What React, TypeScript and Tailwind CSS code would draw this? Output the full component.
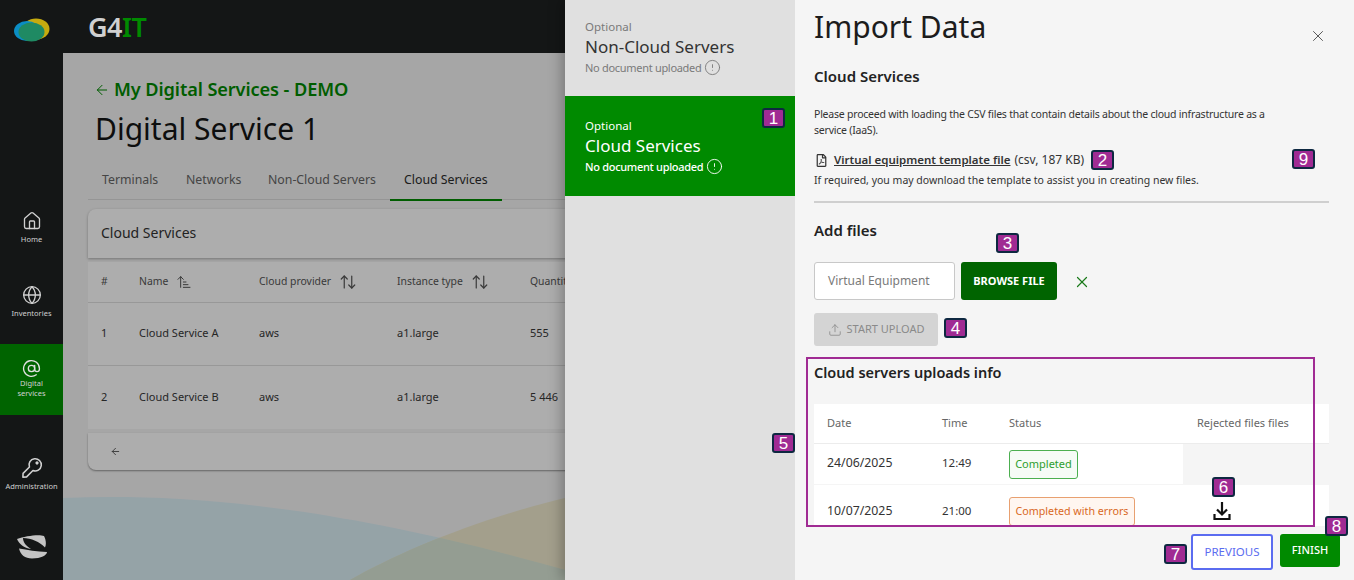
import React from "react";
import { House, Globe, AtSign, X, ArrowLeft, ArrowUpDown, ArrowUpNarrowWide, Upload, CircleAlert } from "lucide-react";
import { FaRegFilePdf } from "react-icons/fa";

const font = { fontFamily: '"Noto Sans", sans-serif' };

function Badge({ n, className }: { n: string; className: string }) {
  return (
    <div
      className={`absolute z-30 flex h-[20px] w-[23px] items-center justify-center rounded-[3px] border-2 border-[#0e2841] bg-[#a02b93] text-[17px] leading-none text-white ${className}`}
      style={{ fontFamily: '"Liberation Sans", sans-serif' }}
    >
      {n}
    </div>
  );
}

function NavItem({ icon, label, active, className, labelClass }: { icon: React.ReactNode; label: React.ReactNode; active?: boolean; className?: string; labelClass?: string }) {
  return (
    <div className={`flex flex-col items-center text-center text-[7.5px] leading-[10px] text-[#d0d0d0] ${active ? "bg-[#006400]" : ""} ${className ?? ""}`}>
      {icon}
      <div className={labelClass ?? "mt-[3px]"}>{label}</div>
    </div>
  );
}

function KeyIcon() {
  return (
    <svg width="22" height="22" viewBox="0 0 24 24" fill="none" stroke="currentColor" strokeWidth="1.7" strokeLinejoin="round">
      <g transform="translate(15.500 8.500) rotate(45)">
        <path d="M-2.700 6.200A6.700 6.700 0 1 1 2.700 6.200V16L0 19L-2.700 16Z" />
        <circle cx="0" cy="-2.800" r="0.900" />
      </g>
    </svg>
  );
}

function Sidebar() {
  return (
    <aside className="flex h-full w-[63px] shrink-0 flex-col items-stretch bg-[#141616]">
      <div className="flex h-[53px] items-start justify-center pt-[18px]">
        <svg width="36" height="26" viewBox="0 0 36 26">
          <ellipse cx="22" cy="11" rx="13.500" ry="10.500" fill="#c6ab0f" />
          <ellipse cx="13" cy="13" rx="13" ry="10" fill="#0b8dc4" />
          <ellipse cx="17.500" cy="14" rx="13" ry="9.500" fill="#1f8a63" />
        </svg>
      </div>
      <NavItem className="mt-[158px]" icon={<House size={20} strokeWidth={1.6} />} label="Home" />
      <NavItem className="mt-[41px]" icon={<Globe size={20} strokeWidth={1.6} />} label="Inventories" />
      <NavItem
        active
        labelClass="mt-0"
        className="mt-[26px] h-[71px] justify-start pt-[15px] text-[#c8dcc0]"
        icon={<AtSign size={19} strokeWidth={1.7} className="text-[#e0e0e0]" />}
        label={<>Digital<br />services</>}
      />
      <NavItem className="mt-[42px]" labelClass="mt-[2px]" icon={<KeyIcon />} label="Administration" />
      <div className="mt-[44px] flex justify-center">
        <svg width="30" height="24" viewBox="0 0 30 24" fill="#c4c4c4">
          <path d="M0 4C8 1 22 -1 27 1C29 5 29.500 9 28 12.500C23 7 14 3 6 3C6 7 9 11 14 14C7 13 2 9 0 4Z" />
          <path d="M2 13.500C10 15 20 16.500 30 17C30 20 24 23.500 15 23.500C8 23.500 3.500 20 2 13.500Z" />
        </svg>
      </div>
    </aside>
  );
}

function Cell({ w, children, className }: { w: string; children?: React.ReactNode; className?: string }) {
  return <div className={`flex shrink-0 items-center gap-[8px] ${w} ${className ?? ""}`}>{children}</div>;
}

function ServiceRow({ n, name, qty, first }: { n: string; name: string; qty: string; first?: boolean }) {
  return (
    <div className={`flex h-[63px] items-center pl-[13px] text-[11px] text-[#383838] ${first ? "border-b border-[#e0e0e0] pb-[2px]" : ""}`}>
      <Cell w="w-[38px]">{n}</Cell>
      <Cell w="w-[120px]">{name}</Cell>
      <Cell w="w-[138px]">aws</Cell>
      <Cell w="w-[133px]">a1.large</Cell>
      <Cell w="w-[80px]">{qty}</Cell>
    </div>
  );
}

function Main() {
  return (
    <div className="flex min-w-0 flex-1 flex-col">
      <header className="flex h-[53px] shrink-0 items-center bg-[#141616] pl-[25px]">
        <span className="text-[27px] font-semibold leading-none tracking-[-0.5px] text-[#d0d0d0]">
          G4<span className="text-[#008a00]">IT</span>
        </span>
      </header>
      <main className="relative flex-1 overflow-hidden bg-[#f5f5f5] pl-[25px]">
        <svg className="absolute bottom-0 left-0 h-[85px] w-[510px]" viewBox="0 0 510 85" preserveAspectRatio="none">
          <defs>
            <clipPath id="blueArea">
              <path d="M0 3C130 -2 280 12 510 77V85H0Z" />
            </clipPath>
          </defs>
          <path d="M0 3C130 -2 280 12 510 77V85H0Z" fill="#dcf0f7" />
          <path d="M287 85C340 55 420 22 510 1V85Z" fill="#f0ebcf" />
          <path d="M287 85C340 55 420 22 510 1V85Z" fill="#dae8d8" clipPath="url(#blueArea)" />
        </svg>
        <div className="relative w-[700px]">
          <div className="flex h-[36px] items-center pl-[6px] pt-[37px] text-[#008a00]">
            <ArrowLeft size={16} strokeWidth={1.5} />
            <span className="ml-[4px] text-[18.2px] font-semibold tracking-[-0.1px]">My Digital Services - DEMO</span>
          </div>
          <h1 className="mt-[6px] pl-[7px] pt-[13px] text-[30px] leading-[40px] text-[#141616]">Digital Service 1</h1>
          <nav className="mt-[19px] flex h-[32px] border-b border-[#dcdcdc] pl-[14px] pt-[3px] text-[12.3px] text-[#666]">
            <span className="w-[84px]">Terminals</span>
            <span className="w-[82px]">Networks</span>
            <span className="w-[136px]">Non-Cloud Servers</span>
            <span className="relative text-[#2c2c2c]">
              Cloud Services
              <span className="absolute -left-[14px] -right-[14px] top-[28px] h-[2px] bg-[#008a00]" />
            </span>
          </nav>
          <section className="mt-[9px]">
            <div className="flex h-[49px] items-center rounded-t-[8px] bg-white pb-[2px] pl-[13px] text-[14px] text-[#333] shadow-[0_1px_3px_rgba(0,0,0,0.3)]">Cloud Services</div>
            <div className="mt-[4px] bg-white">
              <div className="flex h-[41px] items-center border-b border-[#e0e0e0] pl-[13px] text-[10.4px] text-[#555]">
                <Cell w="w-[38px]">#</Cell>
                <Cell w="w-[120px]">Name <ArrowUpNarrowWide size={16} strokeWidth={1.5} /></Cell>
                <Cell w="w-[138px]">Cloud provider <ArrowUpDown size={18} strokeWidth={1.6} /></Cell>
                <Cell w="w-[133px]">Instance type <ArrowUpDown size={18} strokeWidth={1.6} /></Cell>
                <Cell w="w-[80px]">Quantity</Cell>
              </div>
              <ServiceRow n="1" name="Cloud Service A" qty="555" first />
              <ServiceRow n="2" name="Cloud Service B" qty="5 446" />
            </div>
            <div className="mt-[4px] flex h-[37px] items-center rounded-b-[8px] bg-white pl-[22px] text-[#555] shadow-[0_1px_2px_rgba(0,0,0,0.4)]">
              <ArrowLeft size={11} strokeWidth={2} />
            </div>
          </section>
        </div>
        <div className="absolute inset-0 bg-black/[.32]" />
      </main>
    </div>
  );
}

function Step({ title, active, first }: { title: string; active?: boolean; first?: boolean }) {
  return (
    <div className={`${first ? "h-[96px] pt-[20px]" : "h-[100px] pt-[23px]"} pl-[20px] ${active ? "bg-[#008a00] text-white" : "text-[#333]"}`}>
      <div className={`text-[11.5px] leading-[14px] ${active ? "" : "text-[#7a7a7a]"}`}>Optional</div>
      <div className="mt-[2px] text-[17px] leading-[22px]">{title}</div>
      <div className={`mt-px flex items-center gap-[3px] text-[11px] leading-[14px] tracking-[-0.3px] ${active ? "font-medium" : "text-[#7a7a7a]"}`}>
        No document uploaded <CircleAlert size={17} strokeWidth={1.3} />
      </div>
    </div>
  );
}

function Panel() {
  return (
    <div className="absolute inset-y-0 right-0 z-20 flex w-[789px] shadow-[-4px_0_12px_rgba(0,0,0,0.25)]">
      <div className="w-[230px] shrink-0 bg-[#e0e0e0]">
        <Step title="Non-Cloud Servers" first />
        <Step title="Cloud Services" active />
      </div>
      <div className="relative flex min-w-0 flex-1 flex-col bg-[#f5f5f5] pl-[19px] pr-[25px] text-[#333]">
        <div className="flex items-start justify-between">
          <h2 className="pt-[6px] text-[30px] leading-[42px] text-[#1c1c1c]">Import Data</h2>
          <X size={18} strokeWidth={1.3} className="mr-[2px] mt-[27px] text-[#555]" />
        </div>
        <h3 className="mt-[18px] text-[15px] font-semibold leading-[20px] text-[#222]">Cloud Services</h3>
        <p className="mt-[20px] text-[10.5px] leading-[16px] tracking-[-0.22px]">
          Please proceed with loading the CSV files that contain details about the cloud infrastructure as a<br />service (IaaS).
        </p>
        <div className="mt-[14px] flex items-center text-[12px] leading-[16px]">
          <FaRegFilePdf size={13} className="ml-px mr-[6px]" />
          <span className="text-[11.5px] font-semibold underline">Virtual equipment template file</span>
          <span className="ml-[4px]">(csv, 187 KB)</span>
        </div>
        <p className="mt-[5px] text-[10.5px] leading-[14px]">If required, you may download the template to assist you in creating new files.</p>
        <div className="mt-[14px] h-[2px] bg-[#cfcfcf]" />
        <h3 className="mt-[17px] text-[15px] font-semibold leading-[20px] text-[#222]">Add files</h3>
        <div className="mt-[22px] flex h-[38px] items-center">
          <div className="flex h-full w-[141px] items-center rounded-[3px] border border-[#c8c8c8] bg-white pl-[13px] text-[12px] text-[#7a7a7a]">Virtual Equipment</div>
          <div className="ml-[6px] flex h-full w-[96px] items-center justify-center rounded-[3px] bg-[#006400] text-[11px] font-bold text-white">BROWSE FILE</div>
          <X size={18} strokeWidth={1.6} className="ml-[16px] mt-[2px] text-[#1a7a1a]" />
        </div>
        <div className="mt-[13px] flex h-[33px] w-[124px] items-center justify-center gap-[5px] rounded-[3px] bg-[#d4d4d4] text-[11px] text-[#8a8a8a]">
          <Upload size={14} strokeWidth={1.4} /> START UPLOAD
        </div>
        <h3 className="mt-[16px] text-[14.5px] font-semibold leading-[20px] text-[#222]">Cloud servers uploads info</h3>
        <div className="mt-[22px] h-[122px] overflow-hidden text-[11.5px]">
          <div className="flex h-[40px] items-center border-b border-[#ececec] bg-white pl-[13px] text-[11px] text-[#666]">
            <span className="w-[115px]">Date</span>
            <span className="w-[67px]">Time</span>
            <span className="w-[188px]">Status</span>
            <span>Rejected files files</span>
          </div>
          <div className="flex h-[40px] w-[369px] items-center bg-white pl-[13px]">
            <span className="w-[115px] pb-[2px] text-[12.3px]">24/06/2025</span>
            <span className="w-[67px] pb-[2px]">12:49</span>
            <span className="flex h-[29px] w-[69px] items-center justify-center rounded-[3px] border border-[#4caf50] bg-[#f6fbf6] text-[11px] text-[#2e9e2e]">Completed</span>
          </div>
          <div className="mt-[1px] flex h-[54px] items-start bg-white pl-[13px] pt-[12px]">
            <span className="mt-[5px] w-[115px] text-[12.3px]">10/07/2025</span>
            <span className="mt-[5px] w-[67px]">21:00</span>
            <span className="flex h-[29px] w-[126px] items-center justify-center rounded-[3px] border border-[#e8a070] bg-[#fff6f0] text-[10.7px] text-[#d9681e]">Completed with errors</span>
            <svg width="20" height="20" viewBox="0 0 20 20" fill="none" stroke="#111" strokeWidth="2.2" className="ml-[77px] mt-[4px]">
              <path d="M10 1V13M5 8.500L10 13.500L15 8.500" />
              <path d="M2.500 13V18H17.500V13" />
            </svg>
          </div>
        </div>
        <div className="-mr-[11px] mt-[8px] flex justify-end gap-[7px]">
          <div className="flex h-[36px] w-[82px] items-center justify-center rounded-[3px] border-2 border-[#5b6cf0] bg-white text-[11.5px] text-[#5b6cf0]">PREVIOUS</div>
          <div className="flex h-[33px] w-[60px] items-center justify-center rounded-[3px] bg-[#008a00] text-[11px] font-medium text-white">FINISH</div>
        </div>
      </div>
    </div>
  );
}

export default function App() {
  return (
    <div className="relative flex h-[580px] w-[1354px] overflow-hidden" style={font}>
      <Sidebar />
      <Main />
      <Panel />
      <div className="absolute left-[806px] top-[357px] z-30 h-[170px] w-[509px] border-2 border-[#a02b93]" />
      <Badge n="1" className="left-[762px] top-[108px]" />
      <Badge n="2" className="left-[1091px] top-[150px]" />
      <Badge n="3" className="left-[996px] top-[233px]" />
      <Badge n="4" className="left-[944px] top-[318px]" />
      <Badge n="5" className="left-[772px] top-[433px]" />
      <Badge n="6" className="left-[1212px] top-[477px]" />
      <Badge n="7" className="left-[1164px] top-[544px]" />
      <Badge n="8" className="left-[1325px] top-[516px]" />
      <Badge n="9" className="left-[1292px] top-[149px]" />
    </div>
  );
}
